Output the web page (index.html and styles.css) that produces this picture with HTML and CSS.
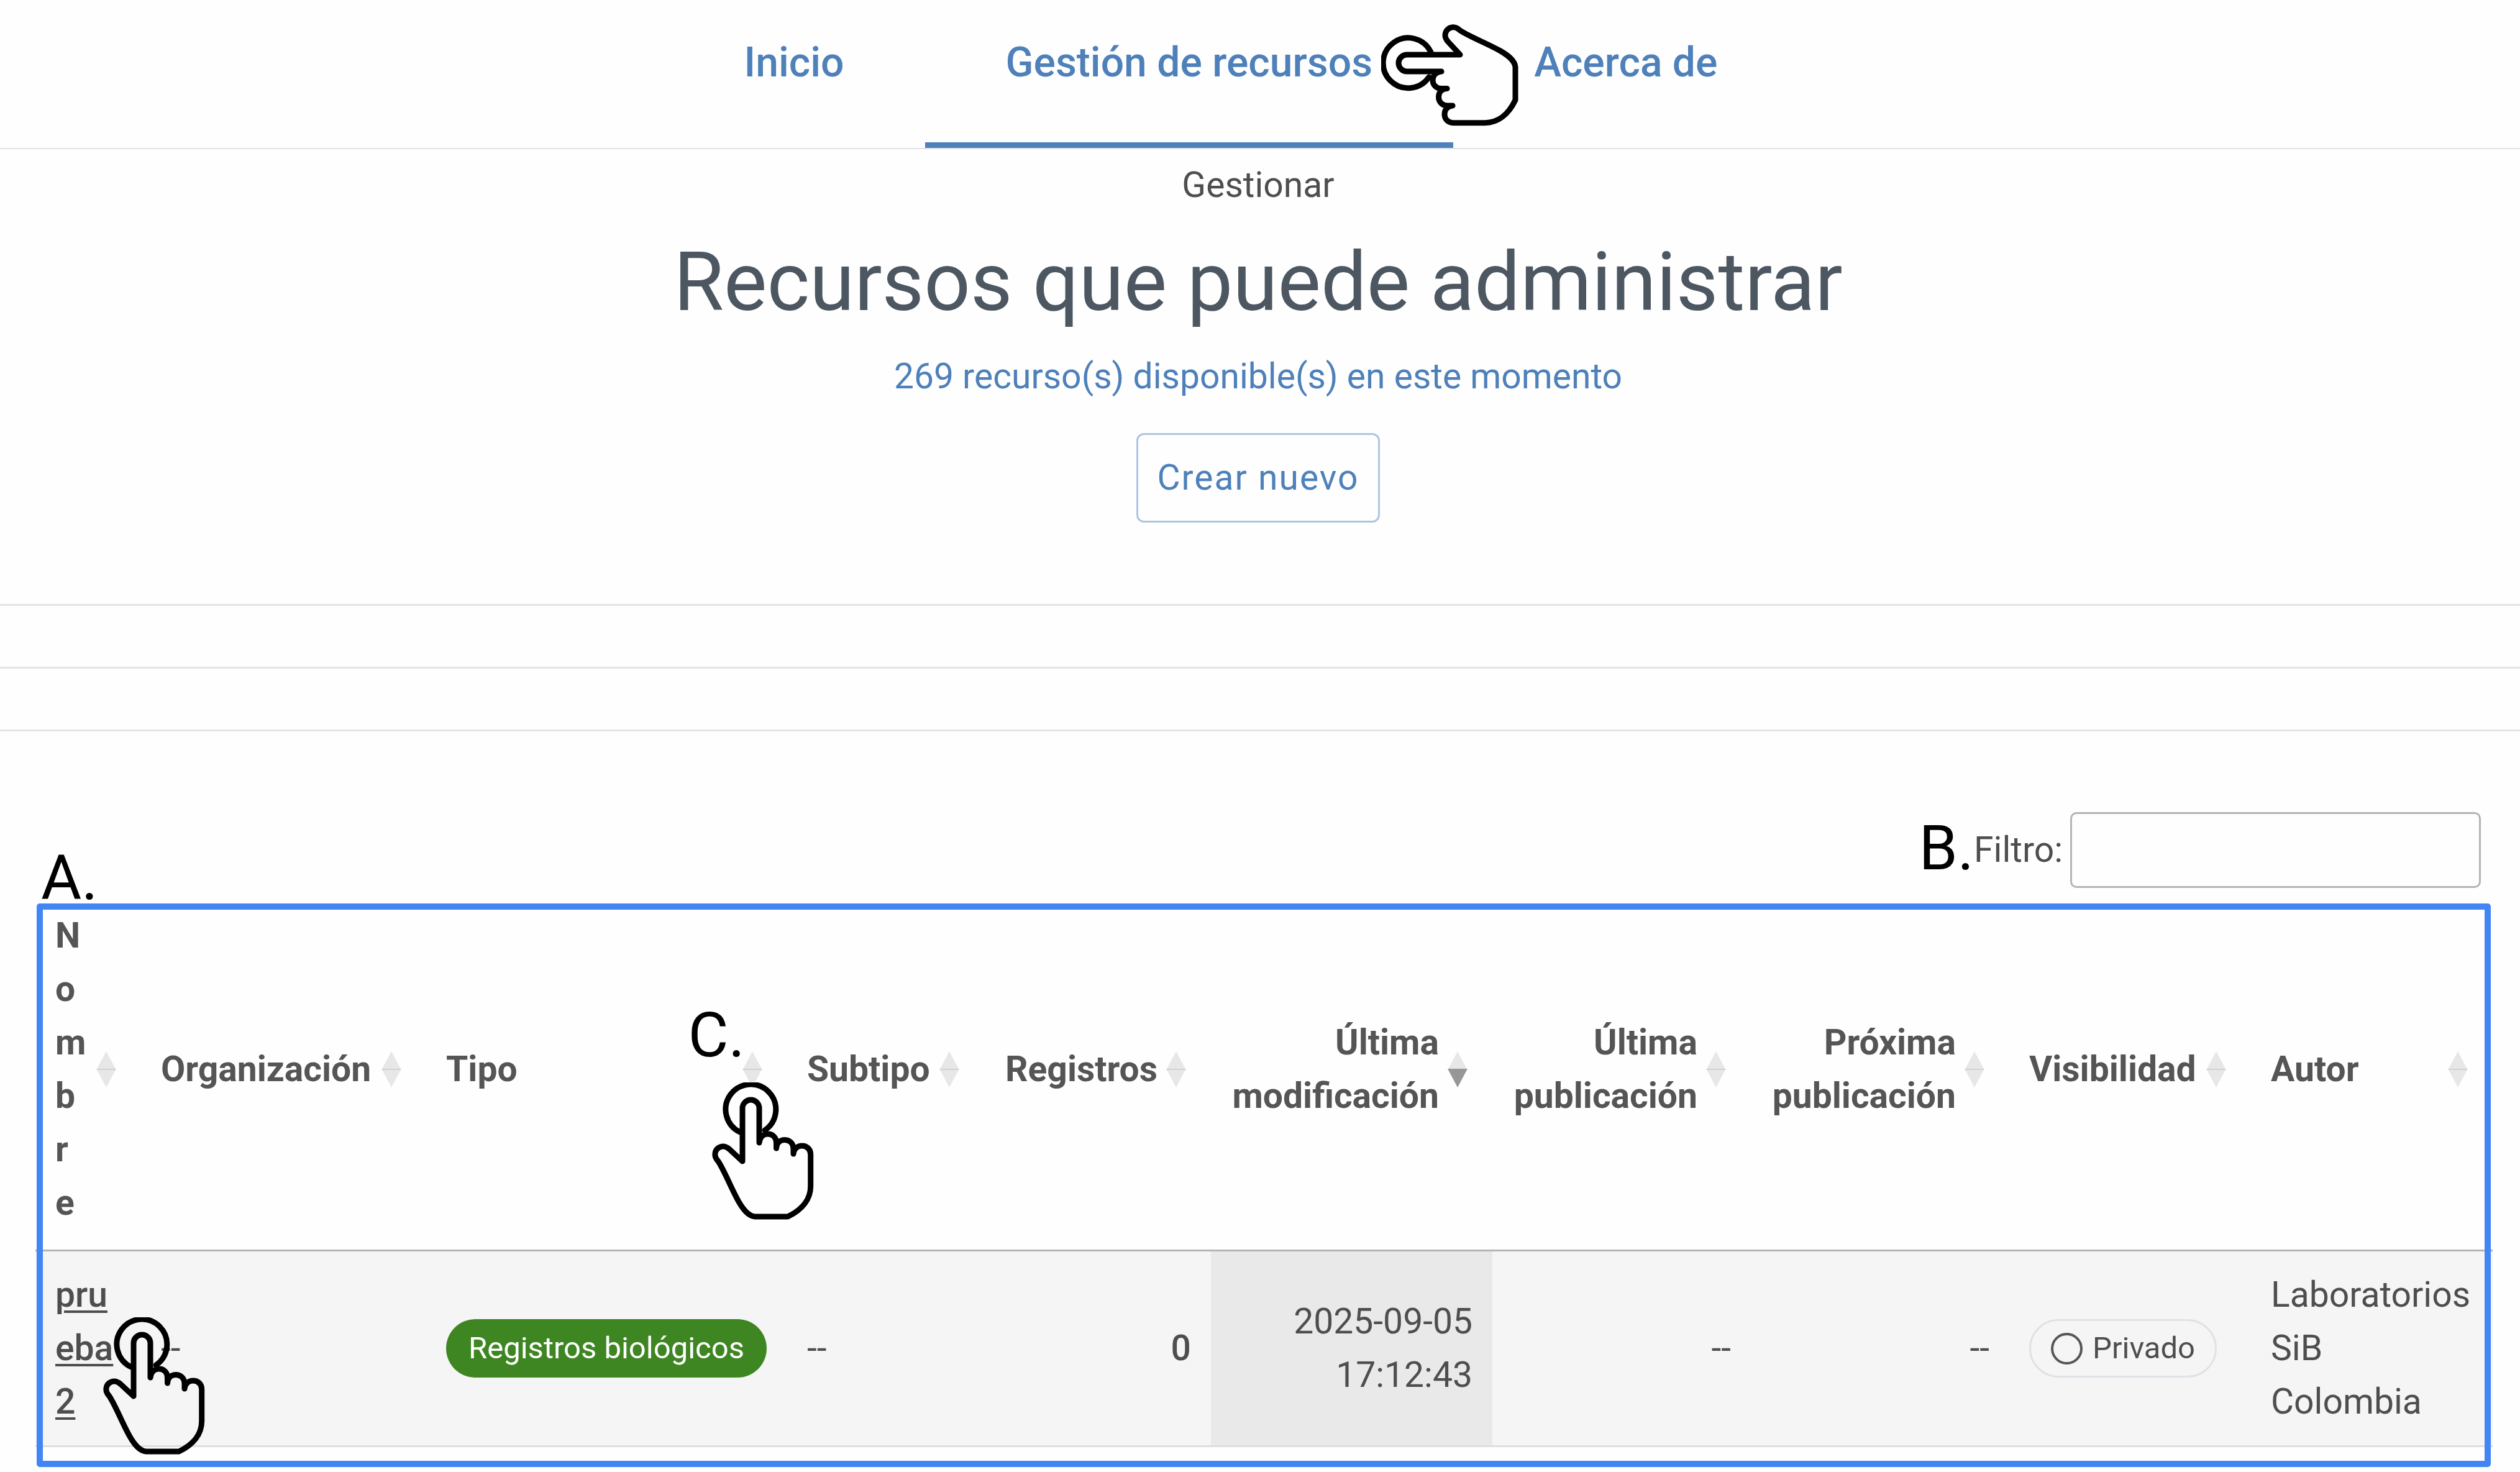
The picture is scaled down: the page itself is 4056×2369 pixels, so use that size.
FILE: index.html
```html
<!DOCTYPE html>
<html lang="es">
<head>
<meta charset="utf-8">
<title>Recursos que puede administrar</title>
<link rel="stylesheet" href="styles.css">
</head>
<body>
<svg class="defs" aria-hidden="true">
  <defs>
    <g id="tap">
      <path d="M45 80A40.4 40.4 0 1 1 85 77"/>
      <path d="M49 127V41.500A13.500 13.500 0 0 1 76 41.500V97C77 88 83 83 90 83C98 83 103.500 89 103.500 97V106C104 97 110 92.500 117 92.500C125 92.500 131 98 131 107V115C132 107 137 102 145 102C153 102 158.700 108 158.700 116V167C158.700 188 145 205 122 216H69C58 215 50 204 43 192C31 171 21 144 10 127C5.500 122 4.500 117 5 114C6 107 12 103 18 103C22 103 25 105 28 107.500Z"/>
    </g>
    <g id="arrows">
      <path d="M0 30L16 0L32 30Z"/>
      <path d="M0 28L16 58L32 28Z"/>
    </g>
  </defs>
</svg>

<header class="topbar">
  <nav class="nav">
    <a class="nav-link" href="#inicio">Inicio</a>
    <a class="nav-link active" href="#recursos" aria-current="page">Gestión de recursos
      <svg class="tap tap-side" viewBox="0 0 221 164" aria-hidden="true"><use href="#tap" transform="matrix(0 1 1 0 0 0)"/></svg>
    </a>
    <a class="nav-link" href="#acerca">Acerca de</a>
  </nav>
</header>

<main>
  <section class="hero">
    <p class="section-name">Gestionar</p>
    <h1 class="title">Recursos que puede administrar</h1>
    <p class="summary">269 recurso(s) disponible(s) en este momento</p>
    <button class="create" type="button">Crear nuevo</button>
  </section>

  <hr class="rule">
  <hr class="rule">
  <hr class="rule">

  <div class="filter">
    <span class="mark">B.</span>
    <label for="filtro">Filtro:</label>
    <input class="filter-input" id="filtro" type="search">
  </div>

  <div class="table-wrap">
    <table class="resources">
      <colgroup>
        <col class="c-name"><col class="c-org"><col class="c-type"><col class="c-subtype"><col class="c-records">
        <col class="c-modified"><col class="c-date"><col class="c-date"><col class="c-end"><col class="c-end">
      </colgroup>
      <thead>
        <tr>
          <th scope="col"><button class="sort narrow" type="button"><span class="text">Nombre</span><svg class="arrows" viewBox="0 0 32 58"><use href="#arrows"/></svg></button></th>
          <th scope="col"><button class="sort" type="button"><span class="text">Organización</span><svg class="arrows" viewBox="0 0 32 58"><use href="#arrows"/></svg></button></th>
          <th scope="col"><button class="sort" type="button"><span class="text">Tipo</span><svg class="arrows" viewBox="0 0 32 58"><use href="#arrows"/></svg></button>
            <span class="mark mark-c">C.</span>
            <svg class="tap tap-type" viewBox="0 0 164 221" aria-hidden="true"><use href="#tap"/></svg>
          </th>
          <th scope="col"><button class="sort" type="button"><span class="text">Subtipo</span><svg class="arrows" viewBox="0 0 32 58"><use href="#arrows"/></svg></button></th>
          <th scope="col"><button class="sort end" type="button"><span class="text">Registros</span><svg class="arrows" viewBox="0 0 32 58"><use href="#arrows"/></svg></button></th>
          <th scope="col" aria-sort="descending"><button class="sort end" type="button"><span class="text">Última modificación</span><svg class="arrows" viewBox="0 0 32 58"><path d="M0 30L16 0L32 30Z"/><path class="on" d="M0 28L16 58L32 28Z"/></svg></button></th>
          <th scope="col"><button class="sort end" type="button"><span class="text">Última publicación</span><svg class="arrows" viewBox="0 0 32 58"><use href="#arrows"/></svg></button></th>
          <th scope="col"><button class="sort end" type="button"><span class="text">Próxima publicación</span><svg class="arrows" viewBox="0 0 32 58"><use href="#arrows"/></svg></button></th>
          <th scope="col"><button class="sort" type="button"><span class="text">Visibilidad</span><svg class="arrows" viewBox="0 0 32 58"><use href="#arrows"/></svg></button></th>
          <th scope="col"><button class="sort" type="button"><span class="text">Autor</span><svg class="arrows" viewBox="0 0 32 58"><use href="#arrows"/></svg></button></th>
        </tr>
      </thead>
      <tbody>
        <tr>
          <td><a class="resource" href="#prueba2">prueba 2</a>
            <svg class="tap tap-name" viewBox="0 0 164 221" aria-hidden="true"><use href="#tap"/></svg>
          </td>
          <td>--</td>
          <td><span class="pill pill-type">Registros biológicos</span></td>
          <td>--</td>
          <td class="num strong">0</td>
          <td class="num sorted">2025-09-05 17:12:43</td>
          <td class="num">--</td>
          <td class="num">--</td>
          <td><span class="pill pill-private"><i class="ring"></i>Privado</span></td>
          <td>Laboratorios SiB Colombia</td>
        </tr>
      </tbody>
    </table>
    <span class="mark mark-a">A.</span>
    <div class="frame"></div>
  </div>
</main>
</body>
</html>
```
FILE: styles.css
```css
* { box-sizing: border-box; }

body {
  margin: 0;
  background: #fefefe;
  color: #4e4e4e;
  font: 400 57px/86px Roboto, sans-serif;
}

button, input { font: inherit; color: inherit; }
p, h1 { margin: 0; }
.defs { display: none; }

/* Navigation */
.topbar { border-bottom: 2px solid #dee2e6; }
.nav {
  display: flex;
  justify-content: center;
  padding-right: 94px;
}
.nav-link {
  position: relative;
  padding: 53px 130px 80px;
  border-bottom: 9px solid transparent;
  color: #4e80ba;
  font-size: 66px;
  line-height: 96px;
  font-weight: 500;
  text-decoration: none;
}
.nav-link.active { border-color: #4e80ba; }

/* Heading */
.hero {
  display: flex;
  flex-direction: column;
  align-items: center;
  padding: 15px 6px 131px 0;
  text-align: center;
}
.title {
  margin: 34px 0 30px;
  color: #4d5761;
  font-size: 131px;
  line-height: 158px;
  font-weight: 400;
}
.summary { color: #4e80ba; }
.create {
  margin-top: 48px;
  padding: 26px 30px;
  border: 3px solid #aec5e1;
  border-radius: 12px;
  background: #fefefe;
  color: #4e80ba;
  line-height: 86px;
  letter-spacing: 2px;
}

.rule {
  margin: 0 0 98px;
  border: 0;
  border-top: 3px solid #e2e5e7;
}

/* Filter */
.filter {
  display: flex;
  justify-content: flex-end;
  align-items: center;
  padding: 32px 63px 0 0;
}
.filter-input {
  width: 661px;
  height: 122px;
  margin-left: 12px;
  padding: 0 24px;
  border: 3px solid #b4b4b4;
  border-radius: 10px;
  background: #fefefe;
  appearance: none;
}

/* Table */
.table-wrap {
  position: relative;
  margin: 0 44px 0 57px;
  padding-bottom: 32px;
}
.resources {
  width: 100%;
  table-layout: fixed;
  border-collapse: separate;
  border-spacing: 0;
}
.c-name { width: 170px; }
.c-org { width: 459px; }
.c-type { width: 581px; }
.c-subtype { width: 317px; }
.c-records { width: 365px; }
.c-modified { width: 453px; }
.c-date { width: 416px; }
.c-end { width: 389px; }

th {
  position: relative;
  padding: 34px 40px 32px 32px;
  border-bottom: 3px solid #b4b4b4;
}
.sort {
  display: flex;
  align-items: center;
  justify-content: space-between;
  gap: 14px;
  width: 100%;
  padding: 0;
  border: 0;
  background: none;
  color: #555;
  font-weight: 700;
  text-align: left;
}
.sort.end { text-align: right; }
.sort.end .text { flex: 1; }
.sort.narrow .text { width: 32px; word-break: break-all; }
.arrows {
  flex: none;
  width: 32px;
  height: 58px;
  fill: rgba(0, 0, 0, .09);
}
.arrows .on { fill: #979797; }

td {
  position: relative;
  padding: 27px 32px;
  border-bottom: 3px solid #dedede;
  background: #f5f5f5;
  overflow-wrap: anywhere;
}
.num { text-align: right; }
.strong { font-weight: 500; }
.sorted { background: #e9e9e9; }
.resource {
  color: #4e4e4e;
  font-weight: 500;
  text-decoration-thickness: 4px;
  text-underline-offset: 6px;
}

.pill {
  display: inline-flex;
  align-items: center;
  height: 94px;
  border-radius: 47px;
  font-size: 49px;
  white-space: nowrap;
  vertical-align: middle;
}
.pill-type {
  padding: 0 36px;
  background: #3e8622;
  color: #fff;
}
.pill-private {
  gap: 16px;
  padding: 0 32px;
  border: 3px solid #dee2e6;
}
.ring {
  width: 51px;
  height: 51px;
  border: 4px solid #555;
  border-radius: 50%;
}

/* Guide marks laid over the page */
.mark {
  color: #000;
  font-size: 100px;
  line-height: 100px;
  font-weight: 400;
}
.filter .mark { padding-bottom: 6px; }
.mark-a { position: absolute; left: 9px; top: -66px; }
.mark-c { position: absolute; right: 68px; top: 187px; }

.frame {
  position: absolute;
  inset: 25px 3px 0 2px;
  border: 10px solid #4285f4;
  border-radius: 5px;
  pointer-events: none;
}

.tap {
  position: absolute;
  z-index: 1;
  width: 164px;
  height: 221px;
  fill: none;
  stroke: #000;
  stroke-width: 9;
  stroke-linecap: round;
  stroke-linejoin: round;
  pointer-events: none;
}
.tap-side { width: 221px; height: 164px; right: -105px; top: 39px; }
.tap-type { right: -43px; top: 313px; }
.tap-name { left: 109px; top: 106px; }
```
